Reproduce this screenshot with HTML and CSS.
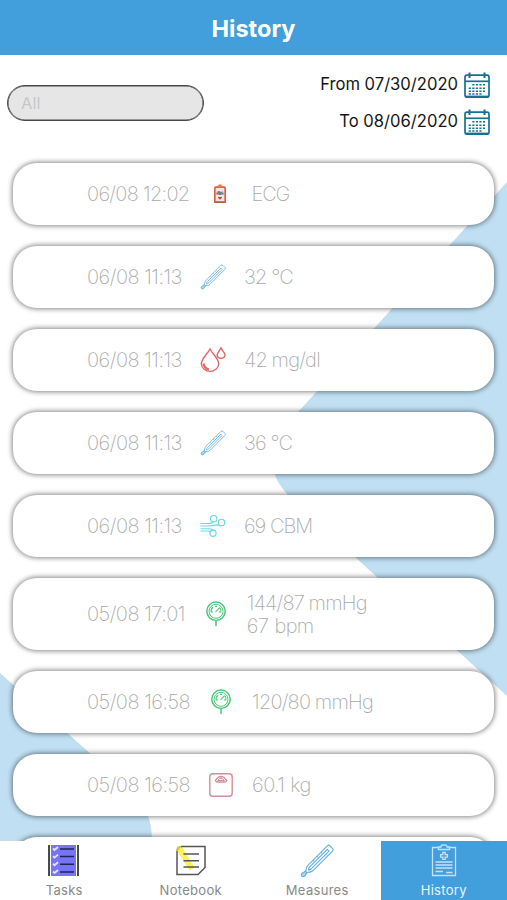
FILE: index.html
```html
<!DOCTYPE html>
<html lang="en">
<head>
<meta charset="utf-8">
<title>History</title>
<link rel="stylesheet" href="styles.css">
</head>
<body>
<svg class="sprites" width="0" height="0" aria-hidden="true">
  <symbol id="calendar" viewBox="0 0 26 26"><g fill="none" stroke="#17718e"><rect x="1" y="3.2" width="24" height="22" rx="2" stroke-width="1.7"/><path d="M1 9.3H25" stroke-width="1.7"/><path d="M1.5 24.6H24.5" stroke-width="2"/><path d="M5.5 .5V6M20.5 .5V6" stroke-width="2"/><path d="M8.3 12.7H22M4.7 16.2H22M4.7 19.3H22M4.7 22H18" stroke-width="1.6" stroke-dasharray="2.2 1.35"/></g></symbol>
  <symbol id="thermometer" viewBox="0 0 26 26"><g fill="none" stroke="#62b1e4" stroke-width=".85" stroke-linejoin="round"><path d="M20.9 1.4Q22 .4 23 1.4L25 3.5Q25.8 4.5 24.9 5.4L10 20.3Q8.8 21.3 7.3 21.5L5 21.8L4.3 21L4.8 18.8Q5 17.2 6.2 16.1Z"/><path d="M7.3 17.7L20.9 4.1L22.2 5.4L8.7 18.9Q7.7 19.8 6.4 19.9Q6.5 18.6 7.3 17.7Z"/><path d="M10 12.3l.9.9M13 9.3l.9.9M16 6.3l.9.9"/><path d="M4.2 20.8L5.3 21.9L3.8 24.4Q2.3 25.5 1.4 24.5Q.6 23.4 1.6 22.3Z" fill="#a9d5f2"/></g></symbol>
  <symbol id="ecg" viewBox="0 0 14 20"><rect x="1.8" y="3.2" width="10.4" height="14.8" rx="1" fill="#eee8e7" stroke="#d7603f" stroke-width="1.7"/><path d="M4 3.2V1.7H5.5V.5H8.5V1.7H10V3.2Z" fill="#e57a42"/><path d="M3.5 7.5H10.5V11H3.5Z" fill="#a5a5ae"/><path d="M3.5 9.5H5L6 7L7 11L8 8.5L10.5 10" stroke="#555564" fill="none" stroke-width=".7"/><path d="M7 15.8L5 13.7Q5 12 7 13Q9 12 9 13.7Z" fill="#cf4337"/><path d="M1 18.2H13" stroke="#ad4835"/></symbol>
  <symbol id="drops" viewBox="0 0 26 26"><g fill="none" stroke="#dc6966" stroke-width="1.4"><path d="M10 2C8.3 6 1.3 11.6 1.3 17A8.8 8.2 0 0 0 18.8 17C18.8 11.6 11.7 6 10 2Z"/><path d="M21 .8C20.2 3 17.1 5.5 17.1 8.1A4 3.8 0 0 0 25 8.1C25 5.5 21.8 3 21 .8Z"/><path d="M3.5 16.5Q4.5 21.7 9 22.5" stroke-width="2.2"/></g></symbol>
  <symbol id="wind" viewBox="0 0 26 26"><g fill="none" stroke="#69d7ee" stroke-width="1.15" stroke-linecap="round"><path d="M1 10.5H8Q10.5 10.5 12.7 9.6"/><circle cx="13.7" cy="5.7" r="3.2"/><path d="M1 13H9C14 13 15 10.5 20.5 12.8"/><circle cx="21.5" cy="9.4" r="3.2"/><path d="M1 15.7H8Q11 15.7 13 17M1 18H8Q9.3 18 10 19"/><circle cx="13" cy="20.2" r="3.1"/></g></symbol>
  <symbol id="gauge" viewBox="0 0 26 26"><g fill="none" stroke="#4cc77a"><circle cx="13" cy="10.3" r="9.2" stroke-width="1.5"/><circle cx="13" cy="10.3" r="7" stroke-width="1"/><path d="M8.1 11.2A5 5 0 0 1 10 6.3M12 5.4H14M16.5 6.5A5 5 0 0 1 18 11.2M8 11H10M16 11H18M12.5 11L16 7.2" stroke-width="1.1"/><path d="M13 20V25" stroke-width="1.5"/></g></symbol>
  <symbol id="scale" viewBox="0 0 26 26"><g fill="none" stroke="#d58b9c"><rect x="1.8" y="1.8" width="22.4" height="22.4" rx="3" stroke-width="1.4"/><path d="M7.3 8.5Q13 .2 18.7 8.5Q18 10 16.7 10H9.3Q8 10 7.3 8.5Z" stroke-width="1.3"/><path d="M9.7 8.5Q13 3.8 16.3 8.5ZM13 5V7" stroke-width="1"/></g></symbol>
</svg>
<div class="app">
  <header class="header">History</header>
  <section class="filters">
    <div class="select">All</div>
    <div class="dates">
      <div class="date"><span class="date-text">From 07/30/2020</span><svg class="calendar"><use href="#calendar"/></svg></div>
      <div class="date"><span class="date-text">To 08/06/2020</span><svg class="calendar"><use href="#calendar"/></svg></div>
    </div>
  </section>
  <main class="history">
    <article class="card"><time class="tight">06/08 12:02</time><span class="icon"><svg class="small"><use href="#ecg"/></svg></span><p class="caps">ECG</p></article>
    <article class="card"><time>06/08 11:13</time><span class="icon"><svg><use href="#thermometer"/></svg></span><p>32 °C</p></article>
    <article class="card"><time>06/08 11:13</time><span class="icon"><svg><use href="#drops"/></svg></span><p>42 mg/dl</p></article>
    <article class="card"><time>06/08 11:13</time><span class="icon"><svg><use href="#thermometer"/></svg></span><p>36 °C</p></article>
    <article class="card"><time>06/08 11:13</time><span class="icon"><svg><use href="#wind"/></svg></span><p class="caps">69 CBM</p></article>
    <article class="card tall"><time>05/08 17:01</time><span class="icon"><svg><use href="#gauge"/></svg></span><p>144/87 mmHg<br><span class="loose">67 bpm</span></p></article>
    <article class="card"><time>05/08 16:58</time><span class="icon"><svg><use href="#gauge"/></svg></span><p>120/80 mmHg</p></article>
    <article class="card"><time>05/08 16:58</time><span class="icon"><svg><use href="#scale"/></svg></span><p class="loose">60.1 kg</p></article>
    <article class="card"></article>
  </main>
  <nav class="tabs">
    <a class="tab"><svg viewBox="0 0 34 34"><path d="M4 1H29V32H4Z" fill="#7774f5"/><path d="M2 1V32M31 1V32" stroke="#424d4c" stroke-width="2"/><path d="M13 5H27M13 12.6H27M13 20.2H27M13 28H27" stroke="#202454" stroke-width="1.5"/><path d="M6 4.5L7.5 6L11 3M6 12.1L7.5 13.6L11 10.6M6 19.7L7.5 21.2L11 18.2M6 27.5L7.5 29L11 26" fill="none" stroke="#e5e5ff" stroke-width="1.8"/></svg><span>Tasks</span></a>
    <a class="tab"><svg viewBox="0 0 34 34"><path d="M5 4L18 25" stroke="#f7f35a" stroke-width="6"/><path d="M8 2.5H31V23.5L24 30.5H3V8Q3 2.5 8 2.5Z" fill="none" stroke="#555" stroke-width="1.5"/><path d="M9.5 10H25M9.5 16.7H25M9.5 23H25" stroke="#555" stroke-width="1.5"/><path d="M3 7Q3.5 3.5 7 2.8" fill="none" stroke="#d4ce32" stroke-width="2"/></svg><span>Notebook</span></a>
    <a class="tab"><svg><use href="#thermometer"/></svg><span>Measures</span></a>
    <a class="tab active"><svg viewBox="0 0 34 34"><g fill="none" stroke="#c4e2f7" stroke-width="1.3"><path d="M11 3.5H5.5V31.5H28.5V3.5H23"/><path d="M11.5 5.5V3H14Q14 1 15.5 1H18.5Q20 1 20 3H22.5V5.5Z"/><path d="M15.8 8.5H18.2V10.7H20.4V13.1H18.2V15.3H15.8V13.1H13.6V10.7H15.8Z"/><path d="M8.5 18H25.5M8.5 21H25.5M8.5 24H25.5M8.5 27.5H16M19 28.5H25.5"/></g></svg><span>History</span></a>
  </nav>
</div>
</body>
</html>
```

FILE: styles.css
```css
* { box-sizing: border-box; }
body { margin: 0; overflow: hidden; font-family: Inter, "Liberation Sans", sans-serif; }
svg { display: block; }
.sprites { position: absolute; }
.app { height: 900px; display: flex; flex-direction: column; background: #fff; }
.header { height: 55px; flex: none; background: #429fdc; color: #fff; font-size: 23.5px; line-height: 57px; font-weight: 700; text-align: center; }
.filters { height: 98px; flex: none; display: flex; justify-content: space-between; align-items: flex-start; padding: 17px 17px 0 7px; }
.select { width: 197px; height: 36px; margin-top: 13px; border: 1px solid #48484a; box-shadow: inset 0 0 0 .5px #48484a; border-radius: 18px; background: #e6e6e6; color: #c7c7c9; font-size: 16.5px; line-height: 34px; padding-left: 13px; }
.dates { display: flex; flex-direction: column; gap: 11px; }
.date { display: flex; align-items: center; justify-content: flex-end; gap: 6px; height: 26px; font-size: 16.6px; color: #151515; }
.date-text { position: relative; top: -1px; }
.calendar { width: 26px; height: 26px; }
.history { flex: 1; min-height: 0; overflow: hidden; display: flex; flex-direction: column; gap: 21px; padding: 10px 13px 0; background: url("data:image/svg+xml,%3Csvg xmlns='http://www.w3.org/2000/svg' width='507' height='688'%3E%3Cpath d='M507 29L299 258Q267 296 275 322Q283 346 355 404L507 543ZM0 520L92 602C135 639 152 652 152 688H0Z' fill='%23c0dff2'/%3E%3C/svg%3E") no-repeat; }
.card { height: 62px; flex: none; display: flex; align-items: center; padding-left: 74px; border-radius: 24px; background: #fff; box-shadow: 0 0 5px 1px rgba(0,0,0,.48); color: #aaa; font-size: 20px; font-weight: 200; line-height: 23px; white-space: nowrap; }
.card.tall { height: 72px; }
.card time { padding-top: 1px; letter-spacing: -.5px; }
.card .tight { letter-spacing: -.7px; }
.card p { margin: 0; padding-top: 1px; letter-spacing: -.8px; word-spacing: -.2px; }
.card .caps { letter-spacing: -1.1px; word-spacing: .5px; }
.card .loose { letter-spacing: -.6px; word-spacing: 1px; }
.icon { width: 26px; margin: 0 18px; display: flex; justify-content: center; }
.icon svg { width: 26px; height: 26px; }
.icon .small { width: 14px; height: 20px; }
.tabs { height: 59px; flex: none; display: flex; background: #fff; padding-left: 1px; }
.tab { flex: 1; display: flex; flex-direction: column; align-items: center; padding-top: 3px; gap: 4px; color: #898989; font-size: 13px; line-height: 17px; letter-spacing: .3px; }
.tab svg { width: 34px; height: 34px; }
.tab.active { background: #429fdc; color: #e9f4fc; }
```
